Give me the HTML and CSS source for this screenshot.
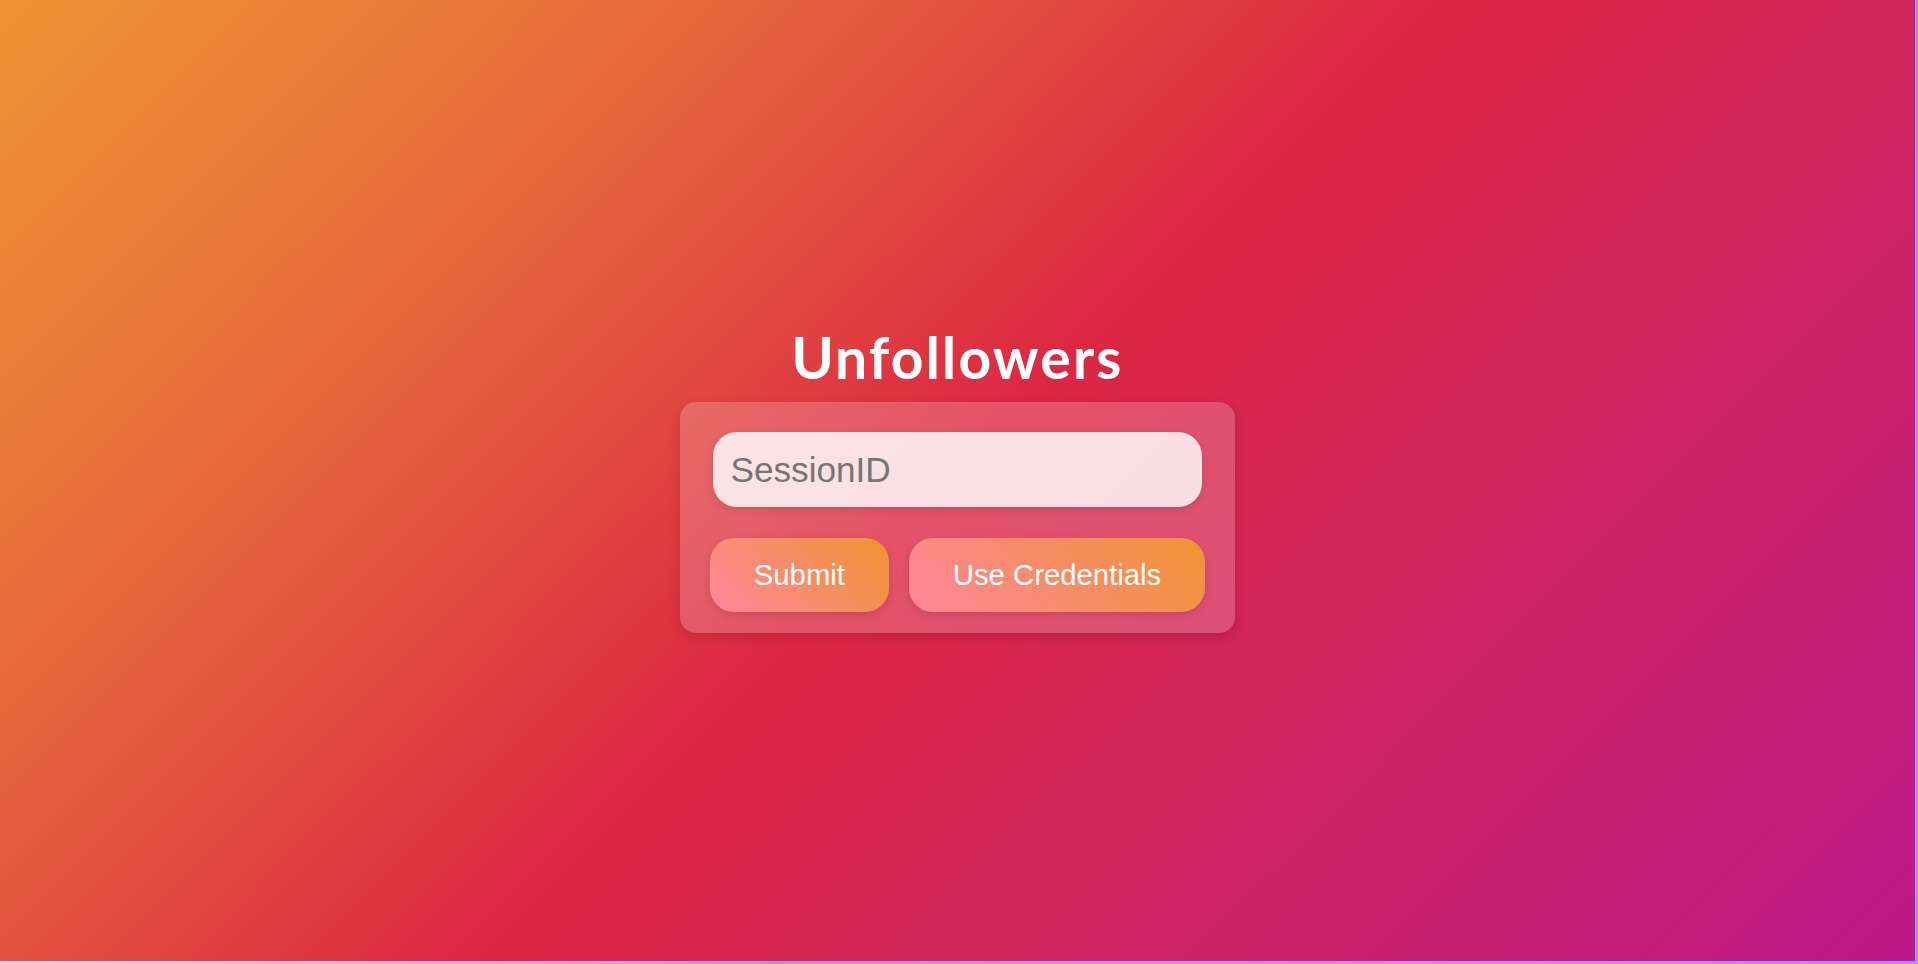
FILE: index.html
```html
<!DOCTYPE html>
<html lang="en">

<head>
    <meta charset="UTF-8">
    <meta name="viewport" content="width=device-width, initial-scale=1.0">
    <title>Unfollowers</title>
    <link rel="stylesheet" href="styles.css">
</head>

<body>
    <div class="main">
        <h1 class="title">Unfollowers</h1>

        <div class="card">
            <input type="text" id="session" name="session" placeholder="SessionID">
            <div class="buttons">
                <button type="button" class="btn">Submit</button>
                <button type="button" class="btn">Use Credentials</button>
            </div>
        </div>
    </div>
</body>

</html>
```

FILE: styles.css
```css
html {
    background: linear-gradient(to right, #f4d6f2, #a996f5 40%, #c58cf2 70%, #a98ef7);
}

body {
    margin: 0 3px 3px 0;
    padding: 0;
    font-family: "Liberation Sans", Arial, sans-serif;
}

.main {
    height: calc(100vh - 3px);
    display: flex;
    flex-direction: column;
    align-items: center;
    justify-content: center;
    background: linear-gradient(135deg, #f09433 0%, #e6683c 25%, #dc2743 50%, #cc2366 75%, #bc1888 100%);
}

.title {
    font-family: Lato, "Noto Sans", sans-serif;
    font-weight: 700;
    font-size: 57px;
    line-height: 58px;
    letter-spacing: 2.2px;
    color: white;
    margin: 0 0 16px 0;
}

.card {
    background: rgba(255, 255, 255, 0.2);
    border-radius: 16px;
    padding: 30px 30px 21px 30px;
    box-shadow: 0px 4px 12px rgba(0, 0, 0, 0.15);
    display: flex;
    flex-direction: column;
}

.card input {
    margin: 0 3px;
    padding: 0.5em;
    font-family: "Liberation Sans", Arial, sans-serif;
    font-size: 35.2px;
    border: none;
    border-radius: 24px;
    background: rgba(255, 255, 255, 0.82);
    box-shadow: 0px 3px 8px rgba(0, 0, 0, 0.12);
    outline: none;
}

.card input::placeholder {
    color: #757575;
}

.buttons {
    display: flex;
    gap: 20px;
    margin-top: 31px;
}

.btn {
    font-family: "Liberation Sans", Arial, sans-serif;
    font-size: 29.3px;
    color: white;
    padding: 0.68em 1.5em;
    border: none;
    border-radius: 24px;
    background: linear-gradient(45deg, #ff869c, #f09433);
    box-shadow: 0px 3px 8px rgba(0, 0, 0, 0.12);
    cursor: pointer;
}
```
